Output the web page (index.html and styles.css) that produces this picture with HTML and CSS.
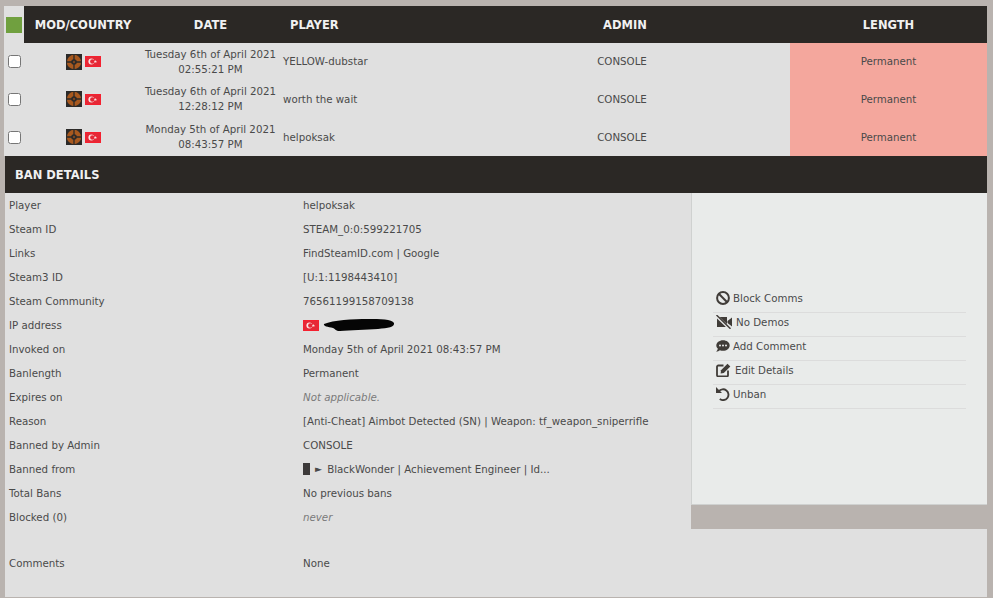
FILE: index.html
```html
<!DOCTYPE html>
<html lang="en">
<head>
<meta charset="utf-8">
<title>Ban list</title>
<link rel="stylesheet" href="styles.css">
</head>
<body>
<svg class="defs" width="0" height="0" aria-hidden="true">
  <symbol id="tf" viewBox="0 0 16 16">
    <rect width="16" height="16" fill="#2b2a29"/>
    <circle cx="8" cy="8" r="7.200" fill="#a8591f"/>
    <path d="M8 0v16M0 8h16" stroke="#2b2a29" stroke-width="1.300"/>
    <circle cx="8" cy="8" r="2.800" fill="#2b2a29"/>
    <circle cx="8" cy="8" r="1.200" fill="#7a4420"/>
  </symbol>
  <symbol id="tr" viewBox="0 0 16 11">
    <rect width="16" height="11" fill="#ee1c25"/>
    <rect x=".5" y=".5" width="15" height="10" fill="#e62836" stroke="#f5202f"/>
    <circle cx="6.400" cy="5.500" r="3" fill="#fbe4e4"/>
    <circle cx="7.300" cy="5.500" r="2.200" fill="#e62836"/>
    <path d="m10.400 3.900.4 1.100 1.200 0-.9.7.3 1.200-1-.7-1 .7.3-1.200-.9-.7 1.200 0z" fill="#fbe4e4"/>
  </symbol>
</svg>
<main class="page">
  <section class="bans">
    <div class="row head">
      <div class="corner"><span class="green"></span></div>
      <div class="cell center">MOD/COUNTRY</div>
      <div class="cell center">DATE</div>
      <div class="cell player-head">PLAYER</div>
      <div class="cell center admin-head">ADMIN</div>
      <div class="cell center">LENGTH</div>
    </div>
    <div class="row ban">
      <div class="cell"><input type="checkbox" class="check"></div>
      <div class="cell center icons"><svg class="tf"><use href="#tf"/></svg><svg class="flag"><use href="#tr"/></svg></div>
      <div class="cell center date">Tuesday 6th of April 2021<br>02:55:21 PM</div>
      <div class="cell name">YELLOW-dubstar</div>
      <div class="cell center">CONSOLE</div>
      <div class="cell center perm">Permanent</div>
    </div>
    <div class="row ban">
      <div class="cell"><input type="checkbox" class="check"></div>
      <div class="cell center icons"><svg class="tf"><use href="#tf"/></svg><svg class="flag"><use href="#tr"/></svg></div>
      <div class="cell center date">Tuesday 6th of April 2021<br>12:28:12 PM</div>
      <div class="cell name">worth the wait</div>
      <div class="cell center">CONSOLE</div>
      <div class="cell center perm">Permanent</div>
    </div>
    <div class="row ban">
      <div class="cell"><input type="checkbox" class="check"></div>
      <div class="cell center icons"><svg class="tf"><use href="#tf"/></svg><svg class="flag"><use href="#tr"/></svg></div>
      <div class="cell center date">Monday 5th of April 2021<br>08:43:57 PM</div>
      <div class="cell name">helpoksak</div>
      <div class="cell center">CONSOLE</div>
      <div class="cell center perm">Permanent</div>
    </div>
  </section>
  <section class="details">
    <h2 class="details-title">BAN DETAILS</h2>
    <div class="details-body">
      <dl class="facts">
        <div class="fact"><dt>Player</dt><dd>helpoksak</dd></div>
        <div class="fact"><dt>Steam ID</dt><dd>STEAM_0:0:599221705</dd></div>
        <div class="fact"><dt>Links</dt><dd>FindSteamID.com | Google</dd></div>
        <div class="fact"><dt>Steam3 ID</dt><dd>[U:1:1198443410]</dd></div>
        <div class="fact"><dt>Steam Community</dt><dd>76561199158709138</dd></div>
        <div class="fact"><dt>IP address</dt><dd class="ip"><svg class="flag"><use href="#tr"/></svg><svg class="scribble" viewBox="0 0 72 14"><path d="M1 6C10 2 30 1 45 1c12 0 24 0 26 4 1 4-6 5-16 6-12 1-28 1-38 2-5 0-4-2-7-3-5-1-10-2-9-4z" fill="#050505"/></svg></dd></div>
        <div class="fact"><dt>Invoked on</dt><dd>Monday 5th of April 2021 08:43:57 PM</dd></div>
        <div class="fact"><dt>Banlength</dt><dd>Permanent</dd></div>
        <div class="fact"><dt>Expires on</dt><dd class="muted">Not applicable.</dd></div>
        <div class="fact"><dt>Reason</dt><dd>[Anti-Cheat] Aimbot Detected (SN) | Weapon: tf_weapon_sniperrifle</dd></div>
        <div class="fact"><dt>Banned by Admin</dt><dd>CONSOLE</dd></div>
        <div class="fact"><dt>Banned from</dt><dd class="server"><span class="tofu"></span><span class="arrow">►</span> BlackWonder | Achievement Engineer | Id...</dd></div>
        <div class="fact"><dt>Total Bans</dt><dd>No previous bans</dd></div>
        <div class="fact"><dt>Blocked (0)</dt><dd class="muted">never</dd></div>
      </dl>
      <aside class="side">
        <ul class="actions">
          <li class="action"><svg class="ico" viewBox="0 0 14 14"><circle cx="7" cy="7" r="5.900" fill="none" stroke="#403c38" stroke-width="2"/><path d="M2.800 2.800 11.200 11.200" stroke="#403c38" stroke-width="2"/></svg><span>Block Comms</span></li>
          <li class="action demos"><svg class="ico wide" viewBox="0 0 16 14"><path d="M1 2h10v10H1zM11.500 6 16 2.500v9L11.500 8z" fill="#403c38"/><path d="M0 .5 14 14" stroke="#e9ebea" stroke-width="2.800"/><path d="M.5 0 14.500 13.800" stroke="#403c38" stroke-width="1.400"/></svg><span>No Demos</span></li>
          <li class="action"><svg class="ico" viewBox="0 0 14 14"><path d="M7 1.200C3.300 1.200.3 3.500.3 6.400c0 1.300.6 2.400 1.600 3.300-.3 1.100-1 2-1.700 3 1.500 0 2.800-.6 3.700-1.400 1 .4 2 .5 3.100.5 3.700 0 6.700-2.400 6.700-5.400S10.700 1.200 7 1.200z" fill="#403c38"/><circle cx="4" cy="6.400" r="1" fill="#e9ebea"/><circle cx="7" cy="6.400" r="1" fill="#e9ebea"/><circle cx="10" cy="6.400" r="1" fill="#e9ebea"/></svg><span>Add Comment</span></li>
          <li class="action details-link"><svg class="ico edit" viewBox="0 0 16 14"><path d="M7.500 2.500H2.300A1.300 1.300 0 0 0 1 3.800v8.400A1.300 1.300 0 0 0 2.300 13.500h8.400A1.300 1.300 0 0 0 12 12.200V7.500" fill="none" stroke="#403c38" stroke-width="1.800"/><path d="M5 7.200 11.500.7l2.800 2.800L7.800 10 4.600 10.500z" fill="#403c38"/></svg><span>Edit Details</span></li>
          <li class="action"><svg class="ico" viewBox="0 0 14 14"><path d="M2.800 4.400A5.400 5.400 0 1 1 3.800 12" fill="none" stroke="#403c38" stroke-width="1.900"/><path d="M0 0v6h6z" fill="#403c38"/></svg><span>Unban</span></li>
        </ul>
      </aside>
    </div>
    <div class="fact comments"><dt>Comments</dt><dd>None</dd></div>
  </section>
</main>
</body>
</html>
```

FILE: styles.css
```css
* {
  box-sizing: border-box;
}

html,
body {
  height: 598px;
  margin: 0;
  overflow: hidden;
}

body {
  background: #b9b3af;
  padding: 6px 6px 1px 4px;
  font: 10.25px/15px "DejaVu Sans", Verdana, sans-serif;
  color: #4a4a4a;
}

.defs {
  position: absolute;
}

.page {
  height: 591px;
  display: flex;
  flex-direction: column;
}

.row {
  display: grid;
  grid-template-columns: 20px 118px 137px 175px 336px 197px;
}

.cell {
  display: flex;
  align-items: center;
}

.center {
  justify-content: center;
  text-align: center;
}

.head {
  height: 37px;
  color: #f1f1f1;
  font-size: 11.5px;
  font-weight: 700;
}

.head .cell {
  padding-top: 1px;
  background: #2b2825;
}

.corner {
  background: #e0e0e0;
  padding: 11px 0 0 2px;
}

.green {
  display: block;
  width: 16px;
  height: 16px;
  background: #70a03f;
}

.head .player-head {
  padding-left: 11px;
}

.head .admin-head {
  padding-left: 6px;
}

.ban {
  height: 37.67px;
  background: #e0e0e0;
}

.check {
  width: 13px;
  height: 13px;
  margin: 0 0 0 4px;
}

.icons {
  gap: 3px;
}

.tf {
  width: 16px;
  height: 16px;
}

.flag {
  width: 16px;
  height: 11px;
  display: block;
}

.name {
  padding-left: 4px;
}

.perm {
  background: #f4a79d;
}

.details {
  flex: 1;
  margin-left: 1px;
  background: #e0e0e0;
  display: flex;
  flex-direction: column;
}

.details-title {
  height: 37px;
  margin: 0;
  padding: 12px 10px 0;
  background: #2b2825;
  color: #f1f1f1;
  font-size: 11.5px;
  line-height: 15px;
  font-weight: 700;
}

.details-body {
  display: flex;
  height: 336px;
}

.facts {
  width: 686px;
  margin: 0;
}

.fact {
  display: grid;
  grid-template-columns: 294px 1fr;
  align-items: center;
  height: 24px;
  padding: 1px 0 0 4px;
}

.fact dt {
  font-weight: 400;
}

.fact dd {
  margin: 0;
}

.muted {
  color: #7a7a7a;
  font-style: italic;
}

.ip,
.server {
  display: flex;
  align-items: center;
}

.scribble {
  width: 72px;
  height: 14px;
  margin-left: 4px;
}

.tofu {
  width: 7px;
  height: 12px;
  margin-right: 5px;
  background: #3d3a3a;
}

.arrow {
  margin-right: 2px;
  font-size: 9px;
}

.server {
  white-space: pre;
}

.side {
  flex: 1;
  height: 312px;
  display: flex;
  flex-direction: column;
  justify-content: center;
  padding: 1px 21px 0;
  background: #e9ebea;
  border-left: 1px solid #cfd1d0;
  border-bottom: 1px solid #cfd1d0;
  box-shadow: 0 24px 0 #b9b3af;
}

.actions {
  list-style: none;
  margin: 0;
  padding: 0;
}

.action {
  display: flex;
  align-items: center;
  gap: 3px;
  height: 24px;
  padding: 0 0 4px 3px;
  border-bottom: 1px solid #dcdcdc;
}

.ico {
  width: 14px;
  height: 14px;
  flex: none;
}

.wide {
  width: 16px;
}

.demos .ico {
  margin-right: 1px;
}

.edit {
  width: 16px;
}

.comments {
  margin-top: 22px;
}
```
